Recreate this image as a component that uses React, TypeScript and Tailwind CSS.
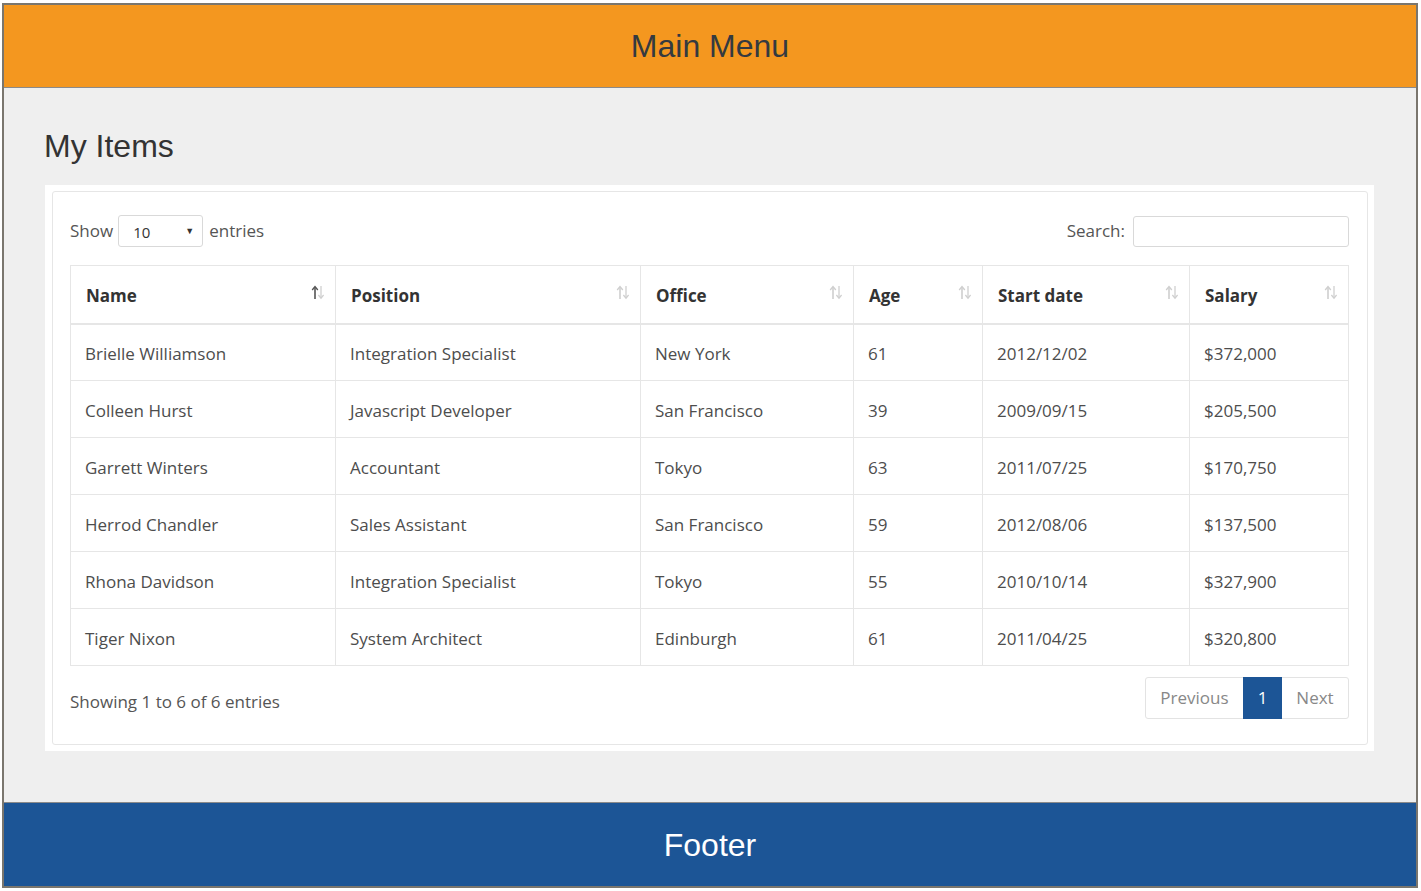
import React from 'react';

const rows = [
  ['Brielle Williamson', 'Integration Specialist', 'New York', '61', '2012/12/02', '$372,000'],
  ['Colleen Hurst', 'Javascript Developer', 'San Francisco', '39', '2009/09/15', '$205,500'],
  ['Garrett Winters', 'Accountant', 'Tokyo', '63', '2011/07/25', '$170,750'],
  ['Herrod Chandler', 'Sales Assistant', 'San Francisco', '59', '2012/08/06', '$137,500'],
  ['Rhona Davidson', 'Integration Specialist', 'Tokyo', '55', '2010/10/14', '$327,900'],
  ['Tiger Nixon', 'System Architect', 'Edinburgh', '61', '2011/04/25', '$320,800'],
];

const columns = [
  { label: 'Name', width: 'w-[265px]', active: true },
  { label: 'Position', width: 'w-[305px]' },
  { label: 'Office', width: 'w-[213px]' },
  { label: 'Age', width: 'w-[129px]' },
  { label: 'Start date', width: 'w-[207px]' },
  { label: 'Salary', width: 'w-[159px]' },
];

function SortIcon({ active }: { active?: boolean }) {
  const up = active ? '#555' : '#cfcfcf';
  const down = '#cfcfcf';
  return (
    <svg width="16" height="15" viewBox="0 0 16 15" className="shrink-0">
      {/* up arrow */}
      <path d="M5 14V2" stroke={up} strokeWidth="1.6" />
      <path d="M2.2 5L5 1.6L7.8 5" fill="none" stroke={up} strokeWidth="1.4" />
      {/* down arrow */}
      <path d="M11 1v12" stroke={down} strokeWidth="1.3" />
      <path d="M8.4 10L11 13.2L13.6 10" fill="none" stroke={down} strokeWidth="1.2" />
    </svg>
  );
}

export default function App() {
  return (
    <div className="w-[1421px] h-[891px] bg-white pt-[3px] pl-[2px]" style={{ fontFamily: '"Open Sans", sans-serif' }}>
      <div className="w-[1416px] h-[885px] border-2 border-[#7a766e] flex flex-col">
        {/* Header */}
        <header className="h-[83px] shrink-0 bg-[#f4971f] border-b border-[#8a8a8a] flex items-center justify-center">
          <span className="text-[32px] text-[#343a40] pb-[1px]" style={{ fontFamily: '"Liberation Sans", Arial, sans-serif' }}>
            Main Menu
          </span>
        </header>

        {/* Content */}
        <main className="flex-1 bg-[#efefef] pl-[41px] pr-[42px] pt-[36px]">
          <h1 className="text-[32px] leading-[44px] text-[#333] ml-[-1px] mb-[17px]" style={{ fontFamily: '"Liberation Sans", Arial, sans-serif' }}>
            My Items
          </h1>

          <div className="bg-white p-[6px] pl-[7px]">
            <div className="border border-[#e6e6e6] rounded-[3px] pl-[17px] pr-[18px] pt-[23px] pb-[25px] text-[17px] text-[#333]">
              {/* Controls */}
              <div className="flex items-center justify-between h-[32px]">
                <div className="flex items-center text-[#555]">
                  <span>Show</span>
                  <div className="ml-[5px] mr-[6px] w-[85px] h-[32px] border border-[#d9d9d9] rounded-[3px] flex items-center justify-between pl-[14px] pr-[8px] text-[15px] text-[#333]">
                    <span className="pt-[2px]">10</span>
                    <span className="text-[9px] text-[#333]">▼</span>
                  </div>
                  <span>entries</span>
                </div>
                <div className="flex items-center text-[#555]">
                  <span>Search:</span>
                  <div className="ml-[8px] w-[216px] h-[31px] border border-[#d9d9d9] rounded-[3px]" />
                </div>
              </div>

              {/* Table */}
              <table className="mt-[18px] w-full border-collapse table-fixed">
                <thead>
                  <tr className="h-[58px]">
                    {columns.map((c) => (
                      <th
                        key={c.label}
                        className={`${c.width} border border-[#e6e6e6] border-b-2 pl-[15px] pr-[9px] text-left font-bold text-[#333]`}
                      >
                        <div className="flex items-center justify-between">
                          <span className="pt-[2px]">{c.label}</span>
                          <span className="-mt-[4px]">
                            <SortIcon active={c.active} />
                          </span>
                        </div>
                      </th>
                    ))}
                  </tr>
                </thead>
                <tbody>
                  {rows.map((r) => (
                    <tr key={r[0]} className="h-[57px]">
                      {r.map((v, i) => (
                        <td key={i} className="border border-[#e6e6e6] pl-[14px] pt-[3px] text-[#4d4d4d]">
                          {v}
                        </td>
                      ))}
                    </tr>
                  ))}
                </tbody>
              </table>

              {/* Footer of table */}
              <div className="flex items-center justify-between mt-[11px]">
                <span className="text-[#555] pt-[8px]">Showing 1 to 6 of 6 entries</span>
                <div className="flex h-[42px] border border-[#e3e3e3] rounded-[3px] text-[#888]">
                  <span className="w-[97px] flex items-center justify-center">Previous</span>
                  <span className="w-[39px] flex items-center justify-center bg-[#1c5596] text-white -my-[1px]">1</span>
                  <span className="w-[66px] flex items-center justify-center">Next</span>
                </div>
              </div>
            </div>
          </div>
        </main>

        {/* Footer */}
        <footer className="h-[84px] shrink-0 bg-[#1c5596] border-t border-[#8a8a8a] flex items-center justify-center">
          <span className="text-[32px] text-white" style={{ fontFamily: '"Liberation Sans", Arial, sans-serif' }}>
            Footer
          </span>
        </footer>
      </div>
    </div>
  );
}
